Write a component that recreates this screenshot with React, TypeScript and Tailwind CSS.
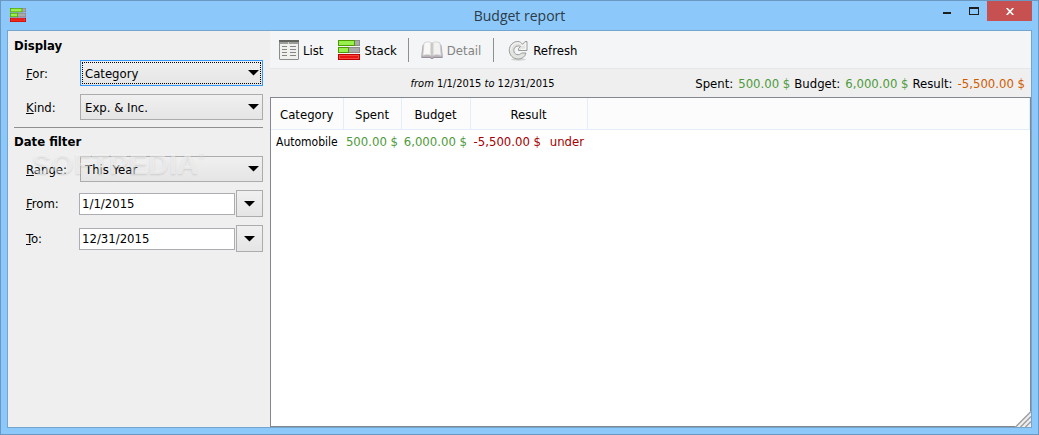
import { useState } from 'react';
import type { ReactNode } from 'react';

// ─── Data ────────────────────────────────────────────────────────────────────

interface BudgetRow {
  category: string;
  spent: string;
  budget: string;
  result: string;
  status: string;
}

const ROWS: BudgetRow[] = [
  { category: 'Automobile', spent: '500.00 $', budget: '6,000.00 $', result: '-5,500.00 $', status: 'under' },
];

const FIELD_FONT = 'font-["DejaVu_Sans_Condensed","DejaVu_Sans",sans-serif] text-[13px] leading-4';

// ─── Icons ───────────────────────────────────────────────────────────────────

function StackIcon({ className }: { className: string }) {
  return (
    <svg viewBox="0 0 22 20" preserveAspectRatio="none" className={className} aria-hidden="true">
      <rect x="0" y="0" width="22" height="6" fill="#8b8b8b" />
      <rect x="1" y="1" width="20" height="4" fill="#aaaaaa" />
      <rect x="0" y="0" width="17" height="6" fill="#4e9a06" />
      <rect x="1" y="1" width="15" height="4" fill="#98f04c" />
      <rect x="0" y="7" width="22" height="6" fill="#8b8b8b" />
      <rect x="1" y="8" width="20" height="4" fill="#aaaaaa" />
      <rect x="0" y="7" width="11" height="6" fill="#4e9a06" />
      <rect x="1" y="8" width="9" height="4" fill="#98f04c" />
      <rect x="0" y="14" width="22" height="6" fill="#c00000" />
      <rect x="1" y="15" width="20" height="4" fill="#f44a40" />
      <rect x="2" y="16" width="18" height="2" fill="#e81510" />
    </svg>
  );
}

function ListIcon() {
  return (
    <svg viewBox="0 0 20 20" className="h-5 w-5" aria-hidden="true">
      <rect x="0.5" y="0.5" width="19" height="19" rx="0.5" fill="#f0f0ee" stroke="#8b8d89" />
      <rect x="0" y="0" width="20" height="2" fill="#62645f" />
      <rect x="1" y="2" width="18" height="2" fill="#9b9d99" />
      <path d="M9.500 2v2" stroke="#d0d2ce" />
      <path d="M3 6.500h5M3 9.500h5M3 12.500h5M3 15.500h5" stroke="#858783" />
      <path d="M11 6.500h6M11 9.500h6M11 12.500h6M11 15.500h6" stroke="#858783" />
    </svg>
  );
}

function BookIcon() {
  return (
    <svg viewBox="0 0 22 20" className="h-5 w-[22px]" aria-hidden="true">
      <path d="M2 5 0.500 17.500h8.500l2 1 2-1h8.500L20 5z" fill="#b9b2ba" stroke="#aaa3ab" strokeWidth="0.8" />
      <path d="M3 3C6 1.300 9 1.700 11 3v13C8.500 14.500 5 14.500 1.800 15.500z" fill="#f8f8f7" stroke="#cbcbca" strokeWidth="0.8" />
      <path d="M19 3C16 1.300 13 1.700 11 3v13c2.500-1.500 6-1.500 9.200-.5z" fill="#f2f2f1" stroke="#cbcbca" strokeWidth="0.8" />
      <path d="M11 3v13" stroke="#b4b4b4" />
      <path d="M9.500 3v11.500M12.500 3v11.500" stroke="#dededd" />
      <path d="M1 17.500h8l2 1 2-1h8" fill="none" stroke="#99919a" />
    </svg>
  );
}

function RefreshIcon() {
  return (
    <svg viewBox="0 0 21 21" className="h-[21px] w-[21px]" aria-hidden="true">
      <ellipse cx="10.500" cy="19.500" rx="7.500" ry="1.200" fill="#d0d2d3" />
      <path
        d="M14.500 4.300 17 1.500h2v9h-8.500V8.500l2-2C9.500 5 5.800 6.700 5.800 10.500c0 4.500 5.700 5.500 7.700 2.500H18c-1 4-4.200 6-7.700 6-5.300 0-9-3.800-9-8.700C1.300 5 5.300 1.500 9.800 1.500c2 0 3.500 1 4.700 2.800z"
        fill="#e3e4e1"
        stroke="#9a9c98"
        strokeLinejoin="round"
      />
      <path d="M2.700 10.300C2.700 6 6 2.900 9.800 2.900c2 0 3.200 1 4.700 3.200L17.700 3v6.300h-5" fill="none" stroke="#fafafa" />
    </svg>
  );
}

function Arrow({ className }: { className?: string }) {
  return (
    <svg viewBox="0 0 11 6" className={`h-[6px] w-[11px] ${className ?? ''}`} aria-hidden="true">
      <path d="M0 0h11L5.500 5.500z" fill="#000" />
    </svg>
  );
}

// ─── Side panel fields ───────────────────────────────────────────────────────

function FieldLabel({ htmlFor, text }: { htmlFor: string; text: string }) {
  return (
    <label htmlFor={htmlFor} className="w-[66px] shrink-0 pt-px pl-3">
      <span className="underline underline-offset-1">{text[0]}</span>
      {text.slice(1)}
    </label>
  );
}

interface SelectFieldProps {
  id: string;
  label: string;
  options: string[];
  focused?: boolean;
}

function SelectField({ id, label, options, focused }: SelectFieldProps) {
  const [value, setValue] = useState(options[0]);

  return (
    <div className="flex items-center">
      <FieldLabel htmlFor={id} text={label} />
      <div className="relative flex-1">
        <select
          id={id}
          value={value}
          onChange={e => setValue(e.target.value)}
          className={`block h-[26px] w-full appearance-none border bg-linear-to-b from-[#f0f0f0] to-[#e5e5e5] pt-0.5 pl-1 outline-none ${
            focused ? 'border-[#3399ff]' : 'border-[#acacac]'
          } ${FIELD_FONT}`}
        >
          {options.map(o => <option key={o}>{o}</option>)}
        </select>
        {focused && <div className="pointer-events-none absolute inset-[2px] border border-dotted border-black" />}
        <Arrow className="pointer-events-none absolute top-[10px] right-1" />
      </div>
    </div>
  );
}

function DateField({ id, label, initial }: { id: string; label: string; initial: string }) {
  const [value, setValue] = useState(initial);

  return (
    <div className="flex items-center">
      <FieldLabel htmlFor={id} text={label} />
      <input
        id={id}
        type="text"
        value={value}
        onChange={e => setValue(e.target.value)}
        className={`-ml-px h-[22px] min-w-0 flex-1 border border-[#abadb3] bg-white px-0.5 outline-none ${FIELD_FONT}`}
      />
      <button
        type="button"
        aria-label={`Pick date, ${label}`}
        className="ml-px flex h-[27px] w-[27px] items-center justify-center border border-[#acacac] bg-linear-to-b from-[#f0f0f0] to-[#e5e5e5]"
      >
        <Arrow />
      </button>
    </div>
  );
}

function SidePanel() {
  return (
    <aside className="relative w-[262px] shrink-0 bg-[#efefef] pr-[7px] pl-1.5">
      <h2 className="flex h-[29px] items-center font-bold">Display</h2>
      <div className="flex flex-col gap-2">
        <SelectField id="for" label="For:" options={['Category', 'Subcategory']} focused />
        <SelectField id="kind" label="Kind:" options={['Exp. & Inc.', 'Expense', 'Income']} />
      </div>
      <hr className="mt-[7px] border-[#8f8f8f]" />
      <h2 className="flex h-7 items-center font-bold">Date filter</h2>
      <div className="flex flex-col gap-2">
        <SelectField id="range" label="Range:" options={['This Year', 'This Month', 'All date']} />
        <DateField id="from" label="From:" initial="1/1/2015" />
        <DateField id="to" label="To:" initial="12/31/2015" />
      </div>

      {/* Watermark */}
      <div className="pointer-events-none absolute top-[117px] left-6 flex items-start font-['Liberation_Sans',Arial,sans-serif] text-[29px] leading-8 font-bold text-white/50 [text-shadow:0_1px_2px_rgba(0,0,0,0.12)]">
        SOFTPEDIA
        <span className="text-[9px] leading-4">®</span>
      </div>
    </aside>
  );
}

// ─── Toolbar ─────────────────────────────────────────────────────────────────

function ToolButton({ icon, label, disabled }: { icon: ReactNode; label: string; disabled?: boolean }) {
  return (
    <button type="button" disabled={disabled} className="flex items-center gap-1 disabled:text-[#838383]">
      {icon}
      <span className="pt-0.5">{label}</span>
    </button>
  );
}

function Toolbar() {
  return (
    <div className="flex h-[38px] items-center border-b border-[#e6e7e8] bg-[#f4f5f7] pt-px pl-[9px]">
      <div className="flex gap-[15px]">
        <ToolButton icon={<ListIcon />} label="List" />
        <ToolButton icon={<StackIcon className="h-5 w-[22px]" />} label="Stack" />
      </div>
      <div className="mr-3 ml-[11px] h-6 w-px bg-[#8f8f8f]" />
      <ToolButton icon={<BookIcon />} label="Detail" disabled />
      <div className="mr-[14px] ml-3 h-6 w-px bg-[#8f8f8f]" />
      <ToolButton icon={<RefreshIcon />} label="Refresh" />
    </div>
  );
}

// ─── Report ──────────────────────────────────────────────────────────────────

function Summary() {
  return (
    <div className="flex h-7 items-center bg-[#efefef] pt-0.5 pr-1.5">
      <p className="flex-1 text-center text-[11px]">
        <i>from</i> 1/1/2015 <i>to</i> 12/31/2015
      </p>
      <dl className="flex gap-1">
        <div className="flex gap-[5px]"><dt>Spent:</dt><dd className="text-[#4e9a3a]">500.00 $</dd></div>
        <div className="flex gap-[5px]"><dt>Budget:</dt><dd className="text-[#4e9a3a]">6,000.00 $</dd></div>
        <div className="flex gap-[5px]"><dt>Result:</dt><dd className="text-[#ce5c00]">-5,500.00 $</dd></div>
      </dl>
    </div>
  );
}

function BudgetTable() {
  return (
    <table className="w-full table-fixed border-collapse">
      <colgroup>
        <col className="w-[72px]" />
        <col className="w-[58px]" />
        <col className="w-[69px]" />
        <col className="w-[74px]" />
        <col className="w-[43px]" />
        <col />
      </colgroup>
      <thead>
        <tr className="h-[31px] border-b border-[#e4eefb] bg-[#fcfcfc] *:border-r *:border-[#e4eefb] *:p-0 *:pt-1 *:font-normal">
          <th>Category</th>
          <th>Spent</th>
          <th>Budget</th>
          <th colSpan={2}>Result</th>
          <td />
        </tr>
      </thead>
      <tbody>
        {ROWS.map(row => (
          <tr key={row.category} className="h-[26px] text-right whitespace-nowrap *:py-0 *:pr-[3px]">
            <td className="pl-[5px] text-left text-xs">{row.category}</td>
            <td className="text-[#4e9a3a]">{row.spent}</td>
            <td className="text-[#4e9a3a]">{row.budget}</td>
            <td className="text-[#a40000]">{row.result}</td>
            <td className="text-[#a40000]">{row.status}</td>
            <td />
          </tr>
        ))}
      </tbody>
    </table>
  );
}

// ─── Window ──────────────────────────────────────────────────────────────────

function TitleBar() {
  return (
    <header className="flex h-[29px] items-start">
      <div className="flex w-[140px] items-center pt-[7px] pl-[9px]">
        <StackIcon className="h-[14px] w-4" />
      </div>
      <h1 className="flex-1 pt-[5px] text-center font-['Open_Sans',sans-serif] text-sm text-[#2b3b48]">
        Budget report
      </h1>
      <div className="flex w-[140px] justify-end pr-1.5">
        <button type="button" aria-label="Minimize" className="flex h-5 w-[27px] items-center justify-center pt-1">
          <span className="h-0.5 w-2 bg-[#1e1e1e]" />
        </button>
        <button type="button" aria-label="Maximize" className="flex h-5 w-[27px] items-center justify-center">
          <span className="h-2 w-2.5 border border-t-2 border-[#1e1e1e]" />
        </button>
        <button type="button" aria-label="Close" className="flex h-5 w-[45px] items-center justify-center bg-[#c75050]">
          <svg viewBox="0 0 8 7" className="h-[7px] w-2" aria-hidden="true">
            <path d="M0.700 0 7.300 7M7.300 0 0.700 7" stroke="#fff" strokeWidth="1.600" />
          </svg>
        </button>
      </div>
    </header>
  );
}

export default function App() {
  return (
    <div className={`flex min-h-screen flex-col border border-[#6b98c2] bg-[#8dc8fa] text-black ${FIELD_FONT}`}>
      <TitleBar />
      <main className="relative mx-1.5 mb-1.5 flex flex-1 border border-[#74a5cf] bg-[#efefef]">
        <SidePanel />
        <section className="flex min-w-0 flex-1 flex-col">
          <Toolbar />
          <Summary />
          <div className="flex-1 border border-[#828790] bg-white">
            <BudgetTable />
          </div>
        </section>

        {/* Resize grip */}
        <svg viewBox="0 0 16 16" className="absolute right-0 bottom-0 h-4 w-4 cursor-se-resize" aria-hidden="true">
          <path d="M16 0v16H0z" fill="#efefef" />
          <path d="M0.500 16 16 0.500M5.500 16 16 5.500M10.500 16 16 10.500" stroke="#a0a0a0" strokeWidth="1.500" />
        </svg>
      </main>
    </div>
  );
}
